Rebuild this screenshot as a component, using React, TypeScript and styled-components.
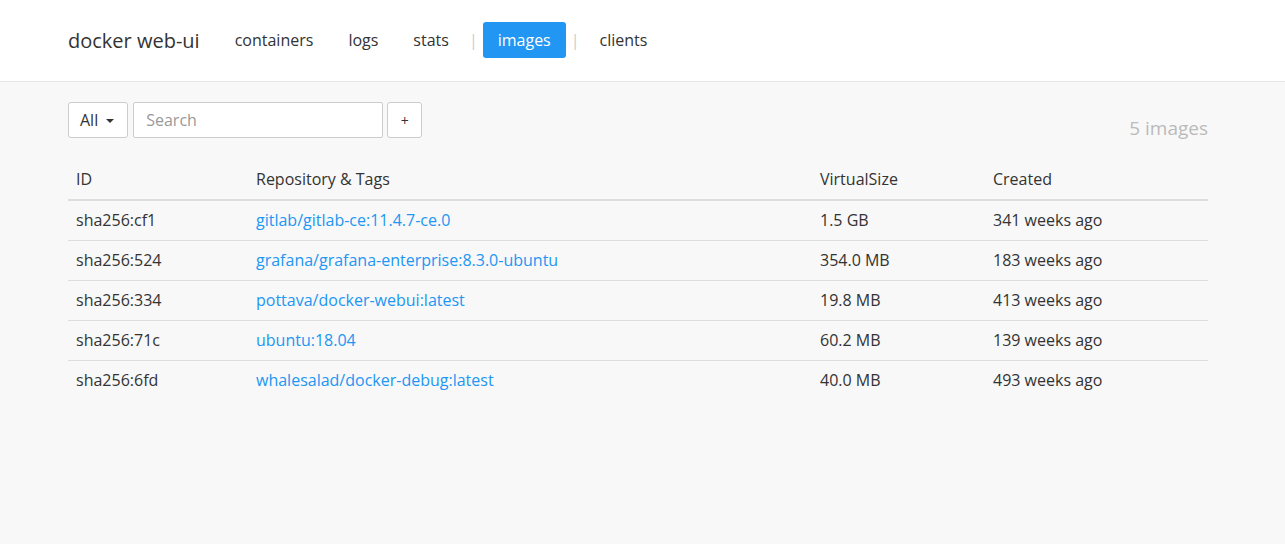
import React from "react";
import styled, { createGlobalStyle } from "styled-components";

const Global = createGlobalStyle`
  html, body { margin: 0; padding: 0; }
  body {
    background: #f8f8f8;
    font-family: "Open Sans", "Liberation Sans", sans-serif;
    font-size: 16px;
    color: #333;
  }
  * { box-sizing: border-box; }
`;

const Navbar = styled.nav`
  background: #fff;
  border-bottom: 1px solid #e7e7e7;
  height: 82px;
`;

const Container = styled.div`
  width: 1140px;
  margin: 0 0 0 68px;
`;

const NavInner = styled(Container)`
  display: flex;
  align-items: center;
  gap: 5px;
  height: 79px;
`;

const Brand = styled.div`
  font-size: 20px;
  color: #333;
  margin-right: 15px;
  padding-top: 2px;
`;

const NavItem = styled.a<{ $active?: boolean }>`
  display: inline-flex;
  align-items: center;
  height: 36px;
  padding: 1px 15px 0;
  border-radius: 3px;
  font-size: 16px;
  color: ${(p) => (p.$active ? "#fff" : "#333")};
  background: ${(p) => (p.$active ? "#2196f3" : "transparent")};
  text-decoration: none;
`;

const Sep = styled.span`
  color: #ccc;
  font-size: 16px;
  padding-top: 1px;
`;

const Main = styled(Container)`
  padding-top: 20px;
`;

const Toolbar = styled.div`
  display: flex;
  align-items: flex-start;
  gap: 5px;
`;

const Btn = styled.button`
  height: 36px;
  background: #fff;
  border: 1px solid #ccc;
  border-radius: 3px;
  font-family: inherit;
  font-size: 16px;
  color: #333;
  padding: 0 13px 0 11px;
  display: inline-flex;
  align-items: center;
  gap: 8px;
`;

const PlusBtn = styled(Btn)`
  width: 35px;
  justify-content: center;
  padding: 0;
  font-size: 14px;
  margin-left: -1px;
`;

const Caret = styled.span`
  width: 0;
  height: 0;
  border-left: 4px solid transparent;
  border-right: 4px solid transparent;
  border-top: 4px solid #333;
  margin-top: 2px;
`;

const Search = styled.input`
  width: 250px;
  height: 36px;
  border: 1px solid #ccc;
  border-radius: 2px;
  background: #fff;
  font-family: inherit;
  font-size: 16px;
  padding: 0 12px;
  color: #333;
  &::placeholder { color: #999; }
`;

const Count = styled.div`
  margin-left: auto;
  margin-top: 13px;
  font-size: 19px;
  color: #bbb;
`;

const Table = styled.table`
  width: 100%;
  border-collapse: collapse;
  margin-top: 19px;
`;

const Th = styled.th<{ $w: number }>`
  width: ${(p) => p.$w}px;
  text-align: left;
  font-weight: 400;
  padding: 9px 8px 10px;
  border-bottom: 2px solid #ddd;
  line-height: 20px;
`;

const Td = styled.td`
  padding: 9px 8px 10px;
  line-height: 20px;
  border-top: 1px solid #ddd;
`;

const Row = styled.tr`
  &:first-child td { border-top: none; }
`;

const Link = styled.a`
  color: #2196f3;
  text-decoration: none;
`;

const images = [
  ["sha256:cf1", "gitlab/gitlab-ce:11.4.7-ce.0", "1.5 GB", "341 weeks ago"],
  ["sha256:524", "grafana/grafana-enterprise:8.3.0-ubuntu", "354.0 MB", "183 weeks ago"],
  ["sha256:334", "pottava/docker-webui:latest", "19.8 MB", "413 weeks ago"],
  ["sha256:71c", "ubuntu:18.04", "60.2 MB", "139 weeks ago"],
  ["sha256:6fd", "whalesalad/docker-debug:latest", "40.0 MB", "493 weeks ago"],
];

export default function App() {
  return (
    <>
      <Global />
      <Navbar>
        <NavInner>
          <Brand>docker web-ui</Brand>
          <NavItem>containers</NavItem>
          <NavItem>logs</NavItem>
          <NavItem>stats</NavItem>
          <Sep>|</Sep>
          <NavItem $active>images</NavItem>
          <Sep>|</Sep>
          <NavItem>clients</NavItem>
        </NavInner>
      </Navbar>
      <Main>
        <Toolbar>
          <Btn>
            All <Caret />
          </Btn>
          <Search placeholder="Search" />
          <PlusBtn>+</PlusBtn>
          <Count>5 images</Count>
        </Toolbar>
        <Table>
          <thead>
            <tr>
              <Th $w={180}>ID</Th>
              <Th $w={564}>Repository &amp; Tags</Th>
              <Th $w={173}>VirtualSize</Th>
              <Th $w={223}>Created</Th>
            </tr>
          </thead>
          <tbody>
            {images.map((r) => (
              <Row key={r[0]}>
                <Td>{r[0]}</Td>
                <Td>
                  <Link>{r[1]}</Link>
                </Td>
                <Td>{r[2]}</Td>
                <Td>{r[3]}</Td>
              </Row>
            ))}
          </tbody>
        </Table>
      </Main>
    </>
  );
}
